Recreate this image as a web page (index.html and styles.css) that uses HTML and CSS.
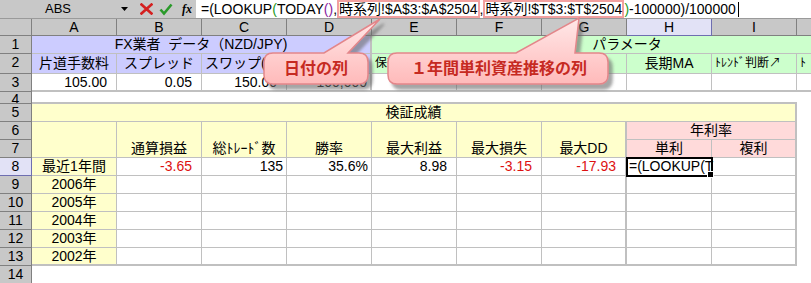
FILE: index.html
```html
<!DOCTYPE html>
<html lang="ja">
<head>
<meta charset="utf-8">
<title>検証成績</title>
<link rel="stylesheet" href="styles.css">
</head>
<body>
<div class="fbar">
  <div class="namebox">ABS</div>
  <div class="dd"><svg width="7" height="4" viewBox="0 0 7 4"><path d="M0 0H7L3.5 4Z" fill="#000"/></svg></div>
  <div class="btns">
    <svg class="ico" width="13" height="12" viewBox="0 0 13 12"><path d="M1.5 1.5L11.5 10.5M11.5 1.5L1.5 10.5" stroke="#d42020" stroke-width="2.6" stroke-linecap="square"/></svg>
    <svg class="ico" width="14" height="13" viewBox="0 0 14 13"><path d="M1.5 6.5L5 10.5L12.5 1.5" stroke="#2a9a2a" stroke-width="2.6" fill="none"/></svg>
    <span class="fx">fx</span>
  </div>
  <div class="formula">=(LOOKUP<span class="pg">(</span>TODAY<span class="pp">()</span>,<span class="ref">時系列!$A$3:$A$2504</span>,<span class="ref">時系列!$T$3:$T$2504</span><span class="pg">)</span>-100000)/100000<span class="caret"></span></div>
</div>

<div class="sheet">
  <!-- column headers -->
  <div class="h"></div>
  <div class="h">A</div><div class="h">B</div><div class="h">C</div><div class="h">D</div><div class="h">E</div>
  <div class="h">F</div><div class="h">G</div><div class="h hs">H</div><div class="h">I</div><div class="h"></div>

  <!-- row 1 -->
  <div class="r">1</div>
  <div class="c lav ctr s4 thr">FX業者&nbsp; データ（NZD/JPY)</div>
  <div class="c grn ctr s6 nor">パラメータ</div>

  <!-- row 2 -->
  <div class="r">2</div>
  <div class="c lav ctr big">片道手数料</div>
  <div class="c lav ctr big">スプレッド</div>
  <div class="c lav lft big">スワップ(概算)</div>
  <div class="c lav ctr big thr"></div>
  <div class="c grn lft sm">保有期間</div>
  <div class="c grn ctr big"></div>
  <div class="c grn ctr big"></div>
  <div class="c grn ctr big">長期MA</div>
  <div class="c grn lft sm">ﾄﾚﾝﾄﾞ判断↗</div>
  <div class="c grn lft sm nor">ﾄ</div>

  <!-- row 3 -->
  <div class="r">3</div>
  <div class="c rgt pad tb">105.00</div>
  <div class="c rgt pad tb">0.05</div>
  <div class="c rgt pad tb">150.00</div>
  <div class="c rgt tb thr">100,000</div>
  <div class="c tb"></div><div class="c tb"></div><div class="c tb"></div>
  <div class="c tb"></div><div class="c tb"></div><div class="c tb nor"></div>

  <!-- row 4 -->
  <div class="r r4">4</div>
  <div class="gap s9"></div>
  <div class="blank"></div>

  <!-- row 5 -->
  <div class="r">5</div>
  <div class="c yel ctr s9 thr">検証成績</div>
  <div class="blank"></div>

  <!-- rows 6-7 -->
  <div class="r">6</div>
  <div class="c yel v2"></div>
  <div class="c yel v2">通算損益</div>
  <div class="c yel v2">総ﾄﾚｰﾄﾞ数</div>
  <div class="c yel v2">勝率</div>
  <div class="c yel v2">最大利益</div>
  <div class="c yel v2">最大損失</div>
  <div class="c yel v2 thr">最大DD</div>
  <div class="c pnk ctr s2 thr">年利率</div>
  <div class="blank"></div>

  <div class="r">7</div>
  <div class="c pnk ctr">単利</div>
  <div class="c pnk ctr thr">複利</div>
  <div class="blank"></div>

  <!-- row 8 -->
  <div class="r rs">8</div>
  <div class="c yel ctr">最近1年間</div>
  <div class="c rgt pad red">-3.65</div>
  <div class="c rgt">135</div>
  <div class="c rgt">35.6%</div>
  <div class="c rgt pad">8.98</div>
  <div class="c rgt pad red">-3.15</div>
  <div class="c rgt pad red thr">-17.93</div>
  <div class="c act">=(LOOKUP(T</div>
  <div class="c thr"></div>
  <div class="blank"></div>

  <!-- rows 9-13 -->
  <div class="r">9</div>
  <div class="c yel ctr">2006年</div>
  <div class="c"></div><div class="c"></div><div class="c"></div><div class="c"></div><div class="c"></div>
  <div class="c thr"></div><div class="c"></div><div class="c thr"></div>
  <div class="blank"></div>

  <div class="r">10</div>
  <div class="c yel ctr">2005年</div>
  <div class="c"></div><div class="c"></div><div class="c"></div><div class="c"></div><div class="c"></div>
  <div class="c thr"></div><div class="c"></div><div class="c thr"></div>
  <div class="blank"></div>

  <div class="r">11</div>
  <div class="c yel ctr">2004年</div>
  <div class="c"></div><div class="c"></div><div class="c"></div><div class="c"></div><div class="c"></div>
  <div class="c thr"></div><div class="c"></div><div class="c thr"></div>
  <div class="blank"></div>

  <div class="r">12</div>
  <div class="c yel ctr">2003年</div>
  <div class="c"></div><div class="c"></div><div class="c"></div><div class="c"></div><div class="c"></div>
  <div class="c thr"></div><div class="c"></div><div class="c thr"></div>
  <div class="blank"></div>

  <div class="r">13</div>
  <div class="c yel ctr tb">2002年</div>
  <div class="c tb"></div><div class="c tb"></div><div class="c tb"></div><div class="c tb"></div><div class="c tb"></div>
  <div class="c tb thr"></div><div class="c tb"></div><div class="c tb thr"></div>
  <div class="blank"></div>

  <div class="r">14</div>
  <div class="blank s10"></div>
</div>

<svg class="callouts" width="811" height="283" viewBox="0 0 811 283">
  <defs>
    <linearGradient id="cg" x1="0" y1="0" x2="0" y2="1">
      <stop offset="0" stop-color="#ffe8e8"/>
      <stop offset="1" stop-color="#ffbaba"/>
    </linearGradient>
    <filter id="sh" x="-20%" y="-40%" width="150%" height="200%">
      <feDropShadow dx="4" dy="5" stdDeviation="1.5" flood-color="#6a6a6a" flood-opacity="0.6"/>
    </filter>
  </defs>
  <path filter="url(#sh)" fill="url(#cg)" stroke="#e3868a" stroke-width="1.5"
        d="M273 53H324L380 19L348 53H359Q368 53 368 62V75Q368 84 359 84H273Q264 84 264 75V62Q264 53 273 53Z"/>
  <path filter="url(#sh)" fill="url(#cg)" stroke="#e3868a" stroke-width="1.5"
        d="M397 53H516L579 18L575 53H599Q608 53 608 62V75Q608 84 599 84H397Q388 84 388 75V62Q388 53 397 53Z"/>
  <text class="ctext" x="316" y="74" text-anchor="middle">日付の列</text>
  <text class="ctext" x="499" y="74" text-anchor="middle">１年間単利資産推移の列</text>
</svg>
</body>
</html>
```

FILE: styles.css
```css
* { box-sizing: border-box; margin: 0; padding: 0; }

body {
  width: 811px;
  height: 283px;
  overflow: hidden;
  position: relative;
  background: #fff;
  font-family: "Liberation Sans", "Noto Sans CJK JP", sans-serif;
  font-size: 14px;
  color: #000;
}

/* ---------- formula bar ---------- */
.fbar {
  display: flex;
  height: 19px;
  background: #c8c8c8;
  border-bottom: 1px solid #9a9a9a;
}
.namebox {
  width: 116px;
  text-align: center;
  line-height: 18px;
  font-size: 13px;
}
.dd {
  width: 20px;
  display: flex;
  align-items: center;
  justify-content: center;
  padding-right: 4px;
}
.btns {
  width: 60px;
  display: flex;
  align-items: center;
  gap: 6px;
  padding-left: 4px;
}
.fx {
  font-family: "Liberation Serif", serif;
  font-style: italic;
  font-weight: bold;
  font-size: 12px;
  margin-left: 3px;
}
.formula {
  flex: 1;
  background: #fff;
  padding-left: 5px;
  line-height: 18px;
  font-size: 14px;
  white-space: nowrap;
  display: flex;
  align-items: stretch;
}
.pg { color: #1e9a1e; }
.pp { color: #8a1ea0; }
.ref {
  border: 2px solid #f2a0a0;
  line-height: 14px;
  padding: 0;
}
.caret {
  width: 1px;
  background: #000;
  margin: 2px 0 1px 2px;
}

/* ---------- sheet grid ---------- */
.sheet {
  display: grid;
  grid-template-columns: 32px repeat(10, 85px);
  grid-template-rows: 17px 18px 20px 18px 12px repeat(10, 18px);
  width: 811px;
  overflow: hidden;
}

.h, .r {
  background: #c8c8c8;
  border-right: 1px solid #808080;
  border-bottom: 1px solid #808080;
  text-align: center;
  font-size: 14px;
  line-height: 16px;
}
.r { line-height: 17px; }
.r4 { overflow: hidden; line-height: 15px; }
.hs, .rs {
  background: #e2e2f6;
  border-color: #6e6eb0;
}

.c {
  border-right: 1px solid #c0c0c0;
  border-bottom: 1px solid #c0c0c0;
  padding: 0 3px;
  line-height: 17px;
  white-space: nowrap;
  overflow: hidden;
}
.blank { background: #fff; }
.gap {
  border-bottom: 2px solid #c0c0c0;
}

.s2 { grid-column: span 2; }
.s4 { grid-column: span 4; }
.s6 { grid-column: span 6; }
.s9 { grid-column: span 9; }
.s10 { grid-column: span 10; }
.v2 {
  grid-row: span 2;
  display: flex;
  align-items: flex-end;
  justify-content: center;
}

.ctr { text-align: center; }
.rgt { text-align: right; }
.lft { text-align: left; }
.pad { padding-right: 9px; }

.big { font-size: 14px; line-height: 19px; }
.sm { font-size: 12px; line-height: 19px; }

.thr { border-right: 2px solid #c0c0c0; }
.tb { border-bottom: 2px solid #c0c0c0; }
.nor { border-right: none; }

.lav { background: #ccccff; }
.grn { background: #ccffcc; }
.yel { background: #ffffcc; }
.pnk { background: #ffdada; }
.red { color: #dd1111; }

.act {
  position: relative;
  outline: 2px solid #000;
  outline-offset: -1px;
  z-index: 1;
  overflow: visible;
  padding-left: 2px;
}
.act::after {
  content: "";
  position: absolute;
  right: -3px;
  bottom: -3px;
  width: 5px;
  height: 5px;
  background: #000;
  border: 1px solid #fff;
}

/* ---------- callouts ---------- */
.callouts {
  position: absolute;
  left: 0;
  top: 0;
  pointer-events: none;
  z-index: 5;
}
.ctext {
  font-family: "Noto Sans CJK JP", sans-serif;
  font-size: 16px;
  font-weight: bold;
  fill: #c62a22;
}
```
